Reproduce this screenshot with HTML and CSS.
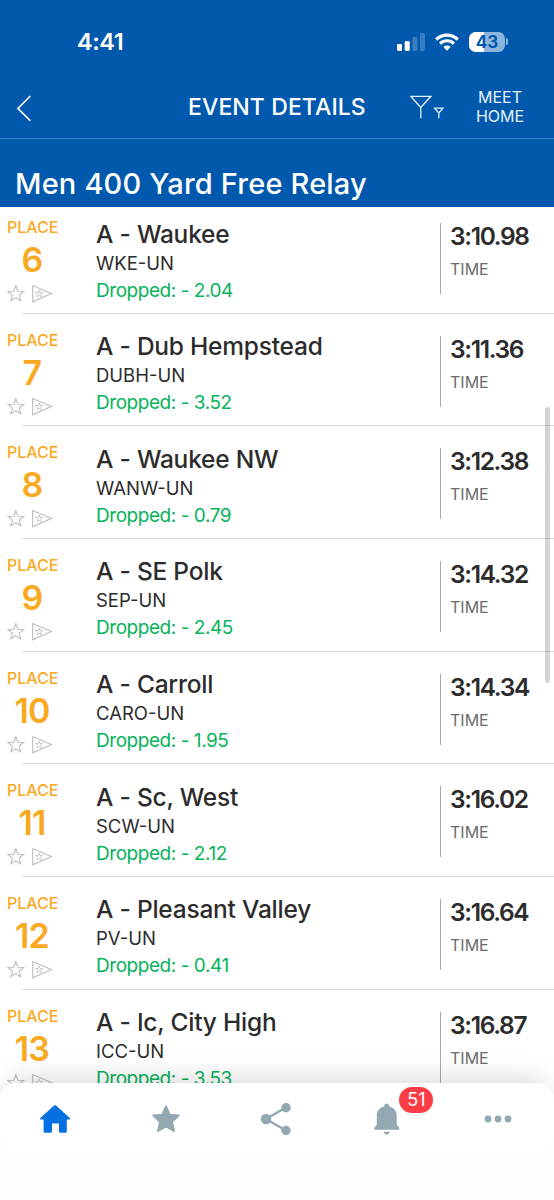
FILE: index.html
```html
<!DOCTYPE html>
<html lang="en">
<head>
  <meta charset="UTF-8" />
  <meta name="viewport" content="width=device-width, initial-scale=1.0" />
  <title>Event Details</title>
  <link rel="stylesheet" href="styles.css">
</head>
<body>
  <svg class="defs" width="0" height="0">
    <symbol id="marks" viewBox="0 0 46 20">
      <path d="M8.8 1.8l2.1 5.4 5.8.3-4.5 3.600 1.500 5.600-4.900-3.100-4.900 3.100 1.500-5.600L.9 7.500l5.800-.3z" />
      <path d="M25.700 1.500v16.300l18.600-8.200z" />
      <path stroke-width=".8" d="M32.200 6l.9 2.500 2.700.1-2.100 1.700.7 2.600-2.200-1.500-2.200 1.500.7-2.600-2.100-1.700 2.700-.1z" />
    </symbol>
  </svg>

  <header class="header">
    <div class="status">
      <span class="clock">4:41</span>
      <div class="status-icons">
        <svg width="28" height="18" viewBox="0 0 28 18" fill="#fff">
          <rect x="0" y="11" width="5" height="7" rx="1.4" />
          <rect x="7.7" y="8" width="5" height="10" rx="1.4" />
          <rect x="15.4" y="4" width="5" height="14" rx="1.4" opacity=".22" />
          <rect x="23" y="0" width="5" height="18" rx="1.4" opacity=".22" />
        </svg>
        <svg width="24" height="18" viewBox="0 0 24 18" fill="none" stroke="#fff" stroke-width="3.2">
          <path d="M1.2 6.5a15.4 15.4 0 0 1 21.6 0" />
          <path d="M5.1 10.6a9.8 9.8 0 0 1 13.8 0" />
          <path d="M12 17.7l-3.6-3.8a5.3 5.3 0 0 1 7.2 0z" fill="#fff" stroke="none" />
        </svg>
        <div class="battery"><span>43</span></div>
      </div>
    </div>
    <div class="nav">
      <svg class="back" width="15" height="27" viewBox="0 0 15 27" fill="none" stroke="#fff" stroke-width="1.6"><path d="M13.3 1L.9 13.4l12.400 12.400" /></svg>
      <h1>EVENT DETAILS</h1>
      <svg class="filter" width="35" height="25" viewBox="0 0 35 25" fill="none" stroke="#e4f0fb" stroke-width="1.3">
        <path d="M.7 1.300h20.200L10.800 12.500zM10.800 12.500v10.800" />
        <path d="M24.600 13.100h8.400l-4.200 4.900zM28.800 18v5.300" />
      </svg>
      <a class="meet" href="#">MEET<br>HOME</a>
    </div>
    <h2>Men 400 Yard Free Relay</h2>
  </header>

  <main class="results">
    <div class="row">
      <div class="place"><span>PLACE</span><b>6</b><svg><use href="#marks" /></svg></div>
      <div class="team"><h3>A - Waukee</h3><p>WKE-UN</p><p class="drop">Dropped: - 2.04</p></div>
      <div class="time"><b>3:10.98</b><span>TIME</span></div>
    </div>
    <div class="row">
      <div class="place"><span>PLACE</span><b>7</b><svg><use href="#marks" /></svg></div>
      <div class="team"><h3>A - Dub Hempstead</h3><p>DUBH-UN</p><p class="drop">Dropped: - 3.52</p></div>
      <div class="time"><b>3:11.36</b><span>TIME</span></div>
    </div>
    <div class="row">
      <div class="place"><span>PLACE</span><b>8</b><svg><use href="#marks" /></svg></div>
      <div class="team"><h3>A - Waukee NW</h3><p>WANW-UN</p><p class="drop">Dropped: - 0.79</p></div>
      <div class="time"><b>3:12.38</b><span>TIME</span></div>
    </div>
    <div class="row">
      <div class="place"><span>PLACE</span><b>9</b><svg><use href="#marks" /></svg></div>
      <div class="team"><h3>A - SE Polk</h3><p>SEP-UN</p><p class="drop">Dropped: - 2.45</p></div>
      <div class="time"><b>3:14.32</b><span>TIME</span></div>
    </div>
    <div class="row">
      <div class="place"><span>PLACE</span><b>10</b><svg><use href="#marks" /></svg></div>
      <div class="team"><h3>A - Carroll</h3><p>CARO-UN</p><p class="drop">Dropped: - 1.95</p></div>
      <div class="time"><b>3:14.34</b><span>TIME</span></div>
    </div>
    <div class="row">
      <div class="place"><span>PLACE</span><b>11</b><svg><use href="#marks" /></svg></div>
      <div class="team"><h3>A - Sc, West</h3><p>SCW-UN</p><p class="drop">Dropped: - 2.12</p></div>
      <div class="time"><b>3:16.02</b><span>TIME</span></div>
    </div>
    <div class="row">
      <div class="place"><span>PLACE</span><b>12</b><svg><use href="#marks" /></svg></div>
      <div class="team"><h3>A - Pleasant Valley</h3><p>PV-UN</p><p class="drop">Dropped: - 0.41</p></div>
      <div class="time"><b>3:16.64</b><span>TIME</span></div>
    </div>
    <div class="row">
      <div class="place"><span>PLACE</span><b>13</b><svg><use href="#marks" /></svg></div>
      <div class="team"><h3>A - Ic, City High</h3><p>ICC-UN</p><p class="drop">Dropped: - 3.53</p></div>
      <div class="time"><b>3:16.87</b><span>TIME</span></div>
    </div>
    <div class="scrollbar"></div>
  </main>

  <nav class="tabs">
    <a href="#"><svg width="32" height="30" viewBox="0 0 32 30" fill="#0571e0"><path d="M15 1.600q1-.8 2 0L31 14.300q.6.9-.5 1.100h-2.700v11.800q0 1.500-1.500 1.500h-4.800q-1.500 0-1.500-1.500v-7.800h-7v7.800q0 1.500-1.500 1.500H6.100q-1.500 0-1.500-1.500V15.400H1.700q-1.200-.2-.6-1.100z" /></svg></a>
    <a href="#"><svg width="30" height="30" viewBox="0 0 30 30" fill="#93a8b0" stroke="#93a8b0" stroke-width="2" stroke-linejoin="round"><path d="M15 2.500l3.600 8.200 9.200.8-6.900 6.200 2.100 9.300-8-4.700-8 4.700 2.100-9.300-6.900-6.200 9.200-.8z" /></svg></a>
    <a href="#"><svg width="32" height="34" viewBox="0 0 32 34" fill="#93a8b0" stroke="#93a8b0" stroke-width="2.500"><path d="M26 5.500L6 17l20 11.500" fill="none" /><circle cx="6" cy="17" r="4" /><circle cx="26" cy="5.700" r="3.500" /><circle cx="26" cy="28.500" r="3.500" /></svg></a>
    <a href="#"><svg width="26" height="34" viewBox="0 0 26 34" fill="#93a8b0"><path d="M12.700 1.500q2.300 0 2.600 2.900c4.700 1.100 7.400 4.500 7.400 9.200v8.300c.1 2 2.700 2.300 2.700 4.600q0 1.300-1.400 1.300H1.600Q.2 27.800.2 26.500c0-2.300 2.500-2.600 2.600-4.600v-8.300c0-4.700 2.600-8.100 7.300-9.200q.3-2.900 2.600-2.900zM9.500 29.800h6.400q-.8 2.900-3.200 2.900t-3.200-2.900z" /></svg><span class="badge">51</span></a>
    <a href="#"><svg width="28" height="8" viewBox="0 0 28 8" fill="#93a8b0"><circle cx="4" cy="4" r="3.400" /><circle cx="14" cy="4" r="3.400" /><circle cx="24" cy="4" r="3.400" /></svg></a>
  </nav>
</body>
</html>
```
FILE: styles.css
```css
:root {
  --blue: #0059ad;
  --orange: #f9a91f;
  --green: #08b25a;
  --font: Inter, "Liberation Sans", sans-serif;
}

* {
  box-sizing: border-box;
}

body {
  margin: 0;
  height: 1200px;
  font-family: var(--font);
  background: #fefefe;
  color: #2c2c2c;
  display: flex;
  flex-direction: column;
  overflow: hidden;
}

h1, h2, h3, p {
  margin: 0;
  font-weight: 500;
  white-space: nowrap;
}

a {
  color: inherit;
  text-decoration: none;
}

.defs {
  position: absolute;
}

.header {
  flex: none;
  height: 207px;
  background: var(--blue);
  color: #fff;
}

.status {
  height: 76px;
  padding: 7px 46px 0 77px;
  display: flex;
  align-items: center;
  justify-content: space-between;
}

.clock {
  font-size: 23.5px;
  font-weight: 600;
  letter-spacing: -0.4px;
}

.status-icons {
  display: flex;
  align-items: center;
  gap: 10px;
}

.battery {
  display: flex;
  align-items: center;
}

.battery span {
  width: 36px;
  height: 20px;
  border-radius: 6.5px;
  background: linear-gradient(90deg, #fff 43%, #8db5dc 43%);
  color: var(--blue);
  font-size: 17px;
  font-weight: 700;
  line-height: 20px;
  text-align: center;
}

.battery::after {
  content: "";
  width: 2px;
  height: 7px;
  margin-left: 1px;
  border-radius: 0 3px 3px 0;
  background: #8db5dc;
}

.nav {
  height: 63px;
  padding-left: 17px;
  border-bottom: 1px solid #3f83c3;
  display: flex;
  align-items: center;
}

.back {
  margin-top: 3px;
}

.nav h1 {
  width: 178px;
  margin-left: 156px;
  font-size: 23px;
  letter-spacing: 0.1px;
}

.filter {
  margin-left: 44px;
}

.meet {
  width: 60px;
  margin-left: 25px;
  font-size: 16px;
  line-height: 19.5px;
  text-align: center;
  color: #e4f0fb;
}

.header h2 {
  padding-left: 15px;
  font-size: 29px;
  line-height: 35px;
  letter-spacing: 0.18px;
  margin-top: 27px;
}

.results {
  position: relative;
  height: 876px;
  overflow: hidden;
  background: #fff;
}

.row {
  position: relative;
  height: 112.67px;
  display: flex;
}

/* list is scrolled slightly under the header */
.row:first-child {
  margin-top: -6px;
}

.row::after {
  content: "";
  position: absolute;
  left: 22px;
  right: 0;
  bottom: 0;
  height: 1px;
  background: #dcdcdc;
}

.place {
  width: 96px;
  padding: 16px 0 0 7px;
  display: flex;
  flex-direction: column;
  color: var(--orange);
}

.place span {
  font-size: 16px;
  line-height: 20px;
  font-weight: 500;
}

.place b {
  width: 50px;
  font-size: 34px;
  line-height: 40px;
  margin-top: 3px;
  font-weight: 600;
  letter-spacing: -0.8px;
  text-align: center;
}

.place svg {
  width: 46px;
  height: 20px;
  margin-top: 4px;
  fill: none;
  stroke: #bdbdbd;
  stroke-width: 1.1;
}

.team {
  flex: 1;
  padding-top: 17.5px;
}

.team h3 {
  font-size: 24.5px;
  line-height: 30px;
  letter-spacing: -0.22px;
}

.team p {
  font-size: 18.5px;
  line-height: 27px;
  font-weight: 400;
  margin-top: 1px;
}

.team .drop {
  font-size: 19px;
  letter-spacing: -0.45px;
  margin-top: 0;
  color: var(--green);
}

.time {
  width: 114px;
  height: 71px;
  margin-top: 22px;
  padding-left: 9px;
  border-left: 1px solid #aaa;
  display: flex;
  flex-direction: column;
}

.time b {
  font-size: 24.5px;
  line-height: 27px;
  font-weight: 600;
  letter-spacing: -1.35px;
}

.time span {
  margin-top: 9px;
  font-size: 16px;
  line-height: 20px;
  color: #6c6c6c;
}

.scrollbar {
  position: absolute;
  top: 200px;
  right: 4px;
  width: 5px;
  height: 276px;
  border-radius: 3px;
  background: rgba(0, 0, 0, 0.17);
}

.tabs {
  position: relative;
  height: 69px;
  border-radius: 16px;
  background: #fff;
  box-shadow: 0 -14px 28px -10px rgba(0, 0, 0, 0.15), 0 0 10px rgba(0, 0, 0, 0.02);
  display: flex;
}

.tabs a {
  flex: 1;
  position: relative;
  display: flex;
  align-items: center;
  justify-content: center;
  padding: 3px 1px 0 0;
}

.badge {
  position: absolute;
  left: 67px;
  top: 4px;
  width: 34px;
  height: 26px;
  border-radius: 13px;
  background: #fc3d45;
  color: #fff;
  font-size: 18px;
  line-height: 26px;
  text-align: center;
}
```
